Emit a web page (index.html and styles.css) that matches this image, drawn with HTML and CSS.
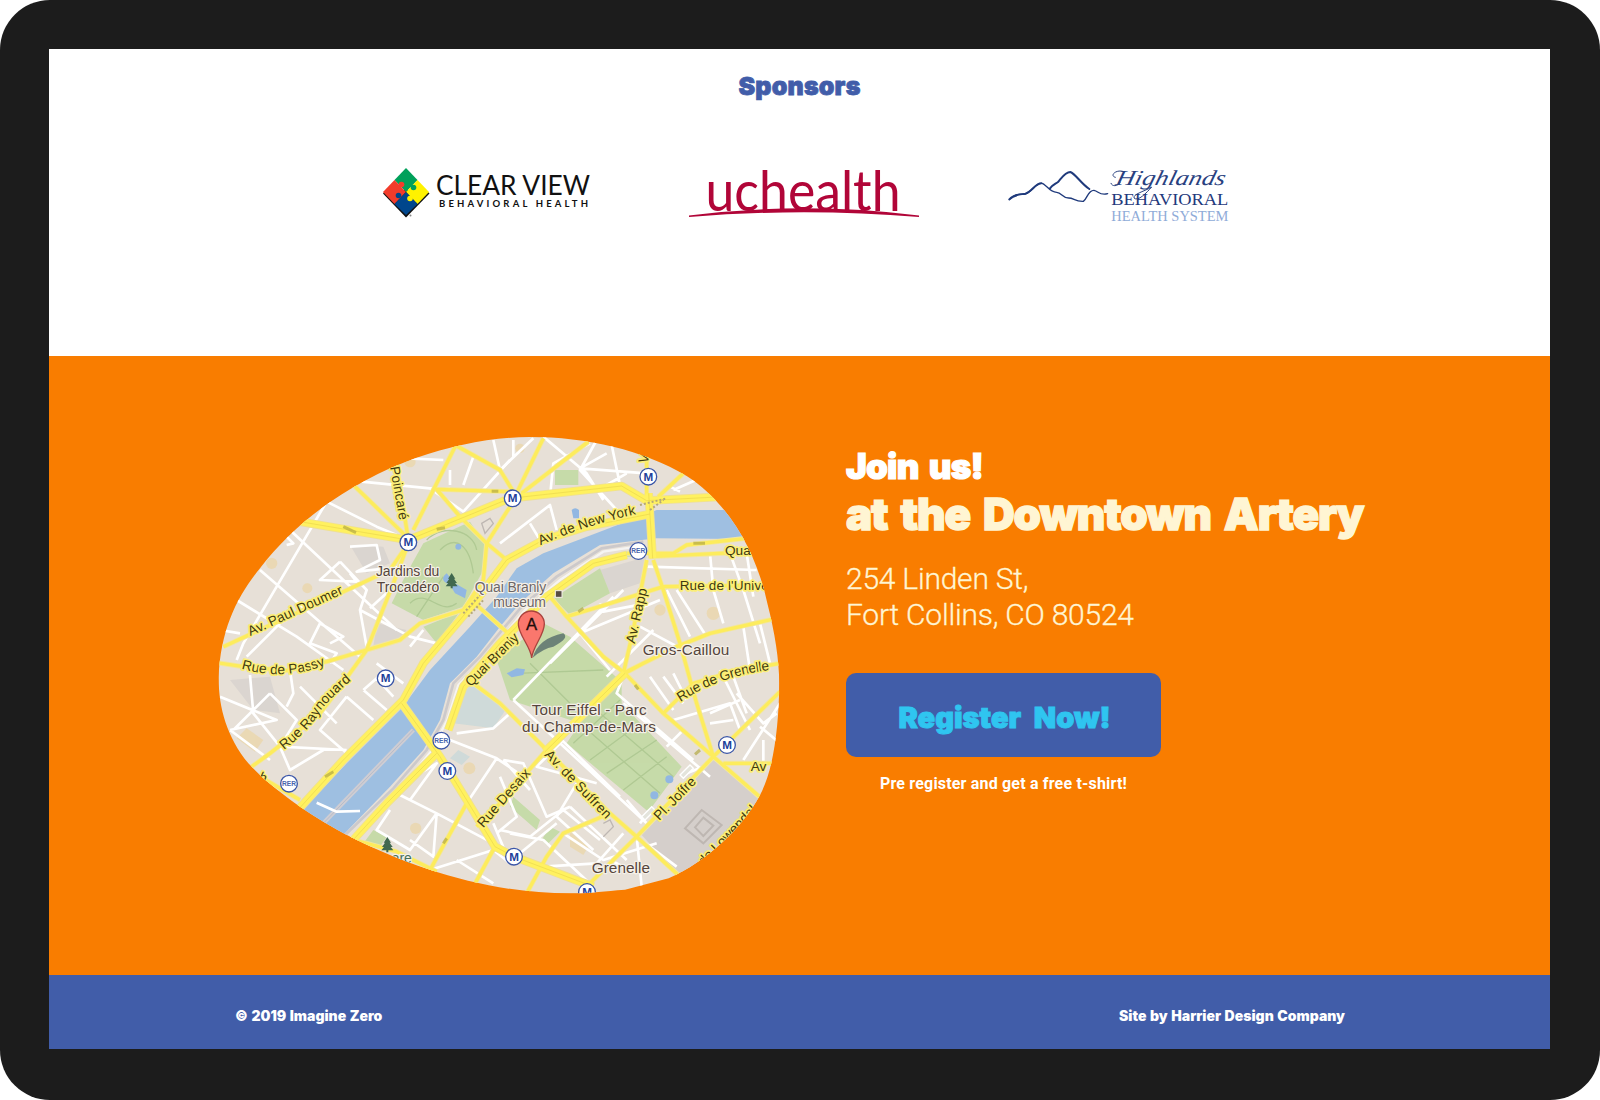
FILE: index.html
```html
<!DOCTYPE html>
<html lang="en">
<head>
<meta charset="utf-8">
<title>Imagine Zero</title>
<link rel="stylesheet" href="styles.css">
</head>
<body>
<div class="device">
  <section class="sponsors">
    <h2 class="sponsors-title">Sponsors</h2>
    <div class="logos">
      <svg width="220" height="65" viewBox="380 160 220 65" role="img" aria-label="Clear View Behavioral Health">
        <path d="M383 193.5L406 217.5L429.5 193.5L426 190H386Z" fill="#111"/>
        <path d="M406 168L417.5 180L406 192L394.500 180Z" fill="#00a05a"/>
        <path d="M394.500 180L406 192L394.500 204L383 192Z" fill="#f23c2b"/>
        <path d="M417.500 180L429 192L417.500 204L406 192Z" fill="#fff200"/>
        <path d="M406 192L417.500 204L406 215L394.500 204Z" fill="#00468c"/>
        <circle cx="401.500" cy="184.500" r="2.800" fill="#f23c2b"/>
        <circle cx="413.500" cy="187.500" r="2.800" fill="#00a05a"/>
        <circle cx="398.500" cy="195.500" r="2.800" fill="#00468c"/>
        <circle cx="410" cy="198.500" r="2.800" fill="#fff200"/>
        <circle cx="410.500" cy="215.500" r="1" fill="#888"/>
        <text class="cv-name" x="436" y="195" textLength="154" lengthAdjust="spacingAndGlyphs">CLEAR VIEW</text>
        <text class="cv-sub" x="439" y="206.500" textLength="149">BEHAVIORAL HEALTH</text>
      </svg>
      <svg width="240" height="65" viewBox="685 160 240 65" role="img" aria-label="uchealth">
        <text class="uc-name" x="705.500" y="210.500" textLength="195" lengthAdjust="spacingAndGlyphs">uchealth</text>
        <path d="M689 215.500Q804 201 919 215.500V217Q804 207.500 689 217Z" fill="#b10538"/>
      </svg>
      <svg width="235" height="65" viewBox="195 60 705 195" role="img" aria-label="Highlands Behavioral Health System">
        <g class="peaks">
          <path d="M208 179C222 162 238 162 256 162C276 156 286 128 306 130C318 132 328 157 350 157C366 158 366 174 386 174C402 174 404 185 430 184C442 176 444 150 462 151C476 154 480 168 503 161" stroke-width="4"/>
          <path d="M208 178C222 163 238 164 256 161C276 155 286 130 304 130" stroke-width="6"/>
          <path d="M330 145C336 136 346 132 354 126C366 112 376 96 391 96C406 101 424 132 448 147" stroke-width="6"/>
        </g>
        <g transform="translate(524 136) skewX(-14)"><text class="hl-script" x="0" y="0" textLength="328" lengthAdjust="spacingAndGlyphs">Highlands</text></g>
        <path class="flourish" d="M548 94C526 88 508 108 526 112M540 128C532 140 516 140 513 130M634 142C620 158 594 186 582 174C580 162 608 156 634 142"/>
        <text class="hl-main" x="514" y="194" textLength="351" lengthAdjust="spacingAndGlyphs">BEHAVIORAL</text>
        <text class="hl-sub" x="514" y="242" textLength="351" lengthAdjust="spacingAndGlyphs">HEALTH SYSTEM</text>
      </svg>
    </div>
  </section>

  <section class="join">
    <svg class="map" width="580" height="470" viewBox="0 0 1740 1410" role="img" aria-label="Map">
      <defs>
        <clipPath id="blob"><path d="M960 21C1130 21 1300 60 1430 138C1560 222 1640 370 1672 520C1695 610 1707 690 1708 760C1706 900 1690 1020 1650 1095C1600 1190 1490 1295 1376 1345L1245 1379C1180 1383 1150 1390 1090 1390C850 1392 620 1320 430 1225C280 1148 170 1060 115 1000C50 920 25 830 26 740C32 600 80 500 150 415C260 270 430 150 620 83C730 45 850 21 960 21Z"/></clipPath>
        <g id="metro"><circle r="25" fill="#fff" stroke="#3c57a8" stroke-width="4"/><text class="metro-m" y="12">M</text></g>
        <g id="rer"><circle r="25" fill="#fff" stroke="#3c57a8" stroke-width="4"/><text class="rer-t" y="7">RER</text></g>
        <g id="tree" fill="#41684f"><path d="M0 -22L11 -5H7L16 8H10L18 18H3V24H-3V18H-18L-10 8H-16L-7 -5H-11Z"/></g>
        <g id="yellow-roads">
          <path d="M430 165L595 325M560 105L595 330M735 50L610 300M40 650L400 485L540 420L595 340L550 460L470 660L380 785L330 850L180 970L125 1010M20 698L100 710L230 722L350 695L470 660L570 630L630 580L760 540L820 450L830 340L750 260L680 178L900 185M830 340L900 230L1000 25M830 340L890 390M735 45L870 120L910 185M935 190L1135 35M1310 70V210M1345 200L1420 130"/>
          <path d="M1610 325L1430 345L1390 370H1250M1320 380L1640 365M1020 500L1070 560L1180 680L1245 730L1360 850L1510 980L1660 1110M1070 560L1200 520L1360 470L1690 465M1310 390L1270 600L1240 730L1400 650L1500 610L1700 565M1330 390L1360 480L1410 640L1460 820L1510 980L1710 785M1360 850L1450 760L1570 725L1710 700M1540 1000H1690M1510 980L1280 1220L1130 1370M790 760L870 820L1010 960L1200 1150L1280 1220L1410 1340M1200 1150L1060 1210L1010 1280L950 1390M800 525L900 615M770 1120L660 1320M430 1230L470 1240L560 1265L680 1325M855 1250L790 1370M150 1040L270 1110M1005 965L870 1120L800 1190M1245 730L1300 700"/>
        </g>
        <g id="yellow-avenues">
          <path d="M1320 252L1130 290L1000 330L890 390L800 510L640 700L580 810L400 990L250 1155M270 275L595 330L900 205L1235 168L1310 212L1540 200M1316 190L1328 385M1250 375L1150 400L1010 500L870 640L760 770L715 900M680 970L530 1120L420 1240M575 820L690 980L770 1110L855 1250L912 1280L1150 1370M1245 730L1005 965"/>
        </g>
      </defs>
      <g clip-path="url(#blob)">
        <rect width="1740" height="1410" fill="#e7e0d7"/>
        <path d="M420 345L520 350L540 400L470 430ZM1170 420L1310 380L1290 460L1200 490ZM60 750L180 740L210 850L130 840ZM500 580L590 600L570 625L490 650Z" fill="#dbd5d0"/>
        <path d="M1510 990L1660 1110L1560 1300L1400 1330L1295 1215Z" fill="#d5cfcb"/>
        <path d="M730 880L760 790L790 755L890 835L850 895ZM745 960L780 980L755 1005L720 985Z" fill="#cfdbd9"/>
        <g fill="#c6dba9">
          <path d="M640 340L780 275L830 350L815 430L760 530L640 570L545 520L590 430ZM640 590L750 545L680 640ZM860 690L1000 580L1080 620L1235 755V820L1415 1010L1315 1145L1070 940L1110 880L900 810ZM1030 505L1170 415L1200 490L1080 555ZM1035 120H1105V165H1035ZM910 1100L990 1170L980 1200L900 1130ZM1020 1190L1050 1205L1010 1245L995 1230ZM490 1200L530 1220L510 1250L460 1240ZM1190 380L1300 350L1290 380Z"/>
        </g>
        <path d="M650 330C700 280 790 300 800 360M690 360C740 310 780 350 790 430M600 520C650 470 690 560 740 520M620 560L700 440M960 700L1080 820M920 730L1180 720M1110 880L1350 1090M1170 850L1390 1040M1090 940L1230 810M1140 990L1290 880M1190 1030L1340 930M1240 1080L1370 980" fill="none" stroke="#b0c993" stroke-width="4"/>
        <path d="M1700 240H1340L1170 305L1000 370L920 415L860 500L780 590L660 720L575 835L410 1000L230 1190L390 1225L540 1070L640 960L690 870L720 760L800 680L870 590L930 520L1030 430L1170 345L1340 325L1700 328Z" fill="#9fbfe1"/>
        <path d="M390 1230L550 1075L650 960L700 870L730 760L810 680L935 530L1040 440L1175 355L1300 335" fill="none" stroke="#ccc9cb" stroke-width="8"/>
        <path d="M405 1240L565 1085L662 965L712 870L745 765L820 690L945 540L1050 450L1180 365L1300 347" fill="none" stroke="#f6f4f2" stroke-width="7"/>
        <path d="M610 900L340 1180" fill="none" stroke="#cfcdd3" stroke-width="13"/>
        <path d="M610 900L340 1180" fill="none" stroke="#aab4c4" stroke-width="2"/>
        <g fill="#ebd5a5" opacity=".7"><circle cx="185" cy="400" r="17"/><circle cx="292" cy="475" r="15"/><path d="M110 895L160 930L135 965L80 925Z"/><path d="M1080 1205L1135 1250L1120 1275L1080 1250Z"/><circle cx="1510" cy="550" r="20"/><circle cx="1350" cy="540" r="17"/><circle cx="617" cy="1195" r="17"/><circle cx="778" cy="1015" r="18"/><circle cx="930" cy="55" r="14"/><circle cx="600" cy="95" r="17"/></g>
        <path class="lanes" d="M80 510L260 620L400 720M150 420L450 680M240 300L560 600M350 215L500 290L560 315M220 310L250 340L230 345M590 85L700 90M455 155L660 175L760 245L900 90M720 165V120M760 165L790 80M850 30L870 120M660 175L720 175M350 215L200 470L100 640L80 690M390 395L330 450L440 455L420 430M390 395L470 480L450 540L470 650M450 540L600 620L680 640M600 650L640 600M420 350L500 345L510 390L440 425L580 410M210 580L110 680M330 580L300 640L380 670L360 700M330 580L400 620L360 640M30 600L90 610M480 535L540 480"/>
        <path class="lanes" d="M30 800L200 870L60 900M120 735L130 850L210 950L410 960M60 900L180 990M180 790L70 900M180 790L260 870L210 950M240 720L250 790L230 830M270 770L380 880M410 800L330 900L410 970M410 800L490 870M340 960L240 1020L210 950M460 780L500 745L550 800M460 780L530 840M500 700L580 760M570 1095L680 1150L850 1240M600 1110L680 1000L620 1035M680 1150L600 1260L500 1200L540 1140M680 1150L670 1280L600 1230M720 930L860 985L940 1040M860 985L770 1120M740 910L850 895L900 850M660 1320L850 1260L900 1300M740 1290L850 1360M900 1300L850 1180M880 990L960 1080M900 1210L1000 1230L1150 1370M870 1200L960 1220L1060 1140L1170 1230"/>
        <path class="lanes" d="M910 30V80M970 25L870 120M1000 20L1130 130L1180 210M1160 30L1110 120L1220 240M1190 70L1110 115L1310 130M1205 45L1230 165M870 340L1020 225L1040 300M960 280L990 330M1020 200L1030 100L1140 40M1250 130L1190 165M1390 180L1480 140M1380 170L1410 185M1310 410L1640 420M1500 370L1510 480L1540 580M1560 370L1600 480L1650 640M1610 370L1630 500M1170 520L1180 545L1310 520M1110 610L1350 510M1020 700L1240 480M1110 610L1200 720M1290 590L1420 660M1370 480L1440 620M1400 480L1490 620M1600 590L1620 720M1650 580L1680 700M1330 600L1190 740"/>
        <path class="lanes" d="M910 810L1210 500M910 810L1310 1180M1045 920L1230 1100M1060 930L980 1010L1160 1060M1240 740L1220 790L1450 990M1370 950L1420 900M1240 820L1500 1040M1320 740L1390 840M1360 740L1420 820M1390 730L1430 810M1530 720L1620 900M1570 740L1610 850M1500 850L1590 810M1390 870L1560 820L1590 900M1500 880L1570 870M1710 820L1600 990M1580 790L1660 880L1700 850M1650 890L1710 940M1660 930V1000M1310 1180L1250 1110M1290 1180L1320 1140M1280 1220L1295 1370M1280 1220L1400 1310M1080 1130L1250 1290M1100 1060L1040 1160L1150 1260M880 990L940 1000L1010 1160L1080 1130M930 1270L1040 1180M1060 1210L1180 1290L1340 1240M1240 1210L1160 1300L1000 1310M870 1040L920 1160L860 1210M1430 1030L1480 1010M1200 1290L1280 1330M320 1118L380 1145L450 1143"/>
        <use href="#yellow-roads" class="road-edge"/>
        <use href="#yellow-avenues" class="avenue-edge"/>
        <use href="#yellow-roads" class="road"/>
        <use href="#yellow-avenues" class="avenue"/>
        <use href="#yellow-avenues" class="median"/>
        <g fill="none" stroke="#beb7b2" stroke-width="6"><path d="M1425 1195L1475 1140L1535 1185L1480 1240ZM1455 1192L1480 1163L1510 1187L1480 1218Z"/><path d="M1180 1180L1200 1170L1210 1190L1180 1220M815 280L840 265L850 280L825 310Z" stroke-width="4"/></g>
        <path d="M1410 1035L1440 1005L1450 1015L1420 1045ZM1295 1160L1325 1130L1335 1140L1305 1170Z" fill="#e4e4dc" stroke="#fff" stroke-width="4"/>
        <g fill="#91b7e2"><circle cx="745" cy="350" r="9"/><path d="M710 430C685 450 710 460 720 465L735 490L765 505L770 480L735 460Z"/><path d="M890 730L920 715L945 718L940 735L905 742Z"/><circle cx="1378" cy="1048" r="12"/><circle cx="1333" cy="1096" r="12"/><path d="M1085 240Q1095 230 1107 240V265H1090Z"/></g>
        <g fill="none" stroke="#b4a945" stroke-width="9" opacity=".7"><path d="M400 290L438 308M680 298L705 293M845 184L865 184M1105 545L1120 535M1450 340L1485 340M1455 973L1470 960M1275 765L1285 778M345 1040L370 1025M700 1240L710 1225"/></g>
        <g class="rail"><path d="M760 550L810 495M775 560L820 510"/><path d="M1290 225L1370 205M1320 240L1360 210"/></g>
        <use href="#tree" x="725" y="451"/><use href="#tree" x="532" y="1243"/>
        <rect x="1036" y="482" width="20" height="20" fill="#574c43" stroke="#f4efe8" stroke-width="3"/>
        <use href="#metro" x="595" y="337"/><use href="#metro" x="908" y="205"/><use href="#metro" x="1315" y="140"/><use href="#metro" x="527" y="745"/><use href="#metro" x="712" y="1023"/><use href="#metro" x="912" y="1280"/><use href="#metro" x="1551" y="945"/><use href="#metro" x="1131" y="1386"/>
        <use href="#rer" x="1285" y="363"/><use href="#rer" x="694" y="932"/><use href="#rer" x="237" y="1061"/>
        <g class="street">
          <text transform="translate(540 112) rotate(80)" textLength="162">Poincaré</text>
          <text transform="translate(121 618) rotate(-24.500)" textLength="308">Av. Paul Doumer</text>
          <path id="passy" d="M94 716Q230 755 354 702" fill="none" stroke="none"/>
          <text><textPath href="#passy" textLength="257">Rue de Passy</textPath></text>
          <path id="raynouard" d="M222 960Q305 895 333 840Q375 790 436 741" fill="none" stroke="none"/>
          <text><textPath href="#raynouard" textLength="292">Rue Raynouard</textPath></text>
          <path id="newyork" d="M992 346Q1120 287 1285 251" fill="none" stroke="none"/>
          <text><textPath href="#newyork" textLength="302">Av. de New York</textPath></text>
          <text transform="translate(782 772) rotate(-45)" textLength="208">Quai Branly</text>
          <text transform="translate(1274 642) rotate(-77)" textLength="168">Av. Rapp</text>
          <text x="1545" y="376">Quai d'Orsay</text>
          <text x="1409" y="480" textLength="346">Rue de l'Université</text>
          <path id="grenelle" d="M1412 816Q1530 735 1690 719" fill="none" stroke="none"/>
          <text><textPath href="#grenelle" textLength="286">Rue de Grenelle</textPath></text>
          <text transform="translate(1002 976) rotate(46)" textLength="268">Av. de Suffren</text>
          <text transform="translate(820 1195) rotate(-49)" textLength="218">Rue Desaix</text>
          <text transform="translate(1348 1173) rotate(-46)" textLength="162">Pl. Joffre</text>
          <text x="1622" y="1024">Av</text>
          <text transform="translate(1481 1309) rotate(-46)">de Lowendal</text>
          <text transform="translate(1312 102) rotate(-75)">V</text>
          <text transform="translate(143 1050) rotate(25)">h</text>
        </g>
        <g class="place">
          <text x="498" y="438" textLength="190">Jardins du</text><text x="500" y="486" textLength="188">Trocadéro</text>
          <text x="794" y="486" textLength="215" class="museum">Quai Branly</text><text x="850" y="532" textLength="158" class="museum">museum</text>
          <text x="1298" y="675" textLength="260" class="large">Gros-Caillou</text>
          <text x="965" y="855" textLength="345" class="large">Tour Eiffel - Parc</text><text x="936" y="906" textLength="402" class="large">du Champ-de-Mars</text>
          <text x="1145" y="1330" textLength="175" class="large">Grenelle</text><text x="545" y="1298" class="square">are</text>
        </g>
        <path d="M968 683Q985 625 1060 610Q1080 625 1030 650Q1000 655 968 683Z" fill="#465c63" opacity=".7"/>
        <path d="M965 684C963 650 925 615 925 582A39 39 0 0 1 1003 582C1003 615 968 650 965 684Z" fill="#fa776d" stroke="#a9433e" stroke-width="4"/>
        <text class="pin-a" x="965" y="601">A</text>
      </g>
    </svg>
    <div class="info">
      <h2 class="headline">Join us!</h2>
      <h1 class="venue">at the Downtown Artery</h1>
      <p class="address">254 Linden St,<br>Fort Collins, CO 80524</p>
      <a class="register">Register Now!</a>
      <p class="note">Pre register and get a free t-shirt!</p>
    </div>
  </section>

  <footer class="footer">
    <span class="copyright">© 2019 Imagine Zero</span>
    <span class="credit">Site by Harrier Design Company</span>
  </footer>
</div>
</body>
</html>
```

FILE: styles.css
```css
* { box-sizing: border-box; }
body { margin: 0; background: #fff; }
h1, h2, p { margin: 0; }
.device {
  width: 1600px; height: 1100px;
  padding: 49px 50px 51px 49px;
  background: #1c1c1c; border-radius: 50px;
  display: flex; flex-direction: column;
  font-family: Inter, sans-serif;
}
.sponsors { height: 307px; background: #fff; padding-top: 20px; }
.sponsors-title, .headline, .venue, .register, .footer {
  font-family: Inter, sans-serif; font-weight: 900; white-space: nowrap;
}
.sponsors-title {
  height: 34px; line-height: 34px; text-align: center;
  font-size: 25px; letter-spacing: .2px; color: #415da9; -webkit-text-stroke: .8px #415da9;
}
.logos { display: grid; grid-template-columns: 305px 320px 235px; padding: 57px 0 0 331px; }
.logos svg { display: block; }
.cv-name { font: 400 26px Lato, sans-serif; fill: #111; }
.cv-sub { font: 700 9.500px Lato, sans-serif; fill: #111; }
.uc-name { font: 400 57px Lato, sans-serif; fill: #b10538; }
.peaks { fill: none; stroke: #1f3a7c; stroke-linecap: round; }
.hl-script { font: italic 400 64px "Liberation Serif", serif; fill: #29417f; }
.flourish { fill: none; stroke: #29417f; stroke-width: 3; stroke-linecap: round; }
.hl-main { font: 400 49px "Liberation Serif", serif; fill: #1f3a7c; }
.hl-sub { font: 400 41px "Liberation Serif", serif; fill: #8fabd8; }

.join {
  height: 619px; background: #f97d00;
  display: grid; grid-template-columns: 580px auto; column-gap: 56px;
  padding: 74px 0 0 161px;
}
.map { display: block; }
.lanes { fill: none; stroke: #fff; stroke-width: 8; stroke-linejoin: round; }
.road-edge, .avenue-edge, .road, .avenue, .median { fill: none; stroke-linejoin: round; }
.road-edge { stroke: #f2e6a0; stroke-width: 15; }
.road { stroke: #fdec5c; stroke-width: 10; }
.avenue-edge { stroke: #efe092; stroke-width: 26; }
.avenue { stroke: #fff15f; stroke-width: 21; }
.median { stroke: #ead64d; stroke-width: 2; }
.rail { fill: none; stroke: #b5a878; stroke-width: 6; stroke-dasharray: 6 6; }
.street text {
  font: 400 41px "Liberation Sans", sans-serif; fill: #40380f;
  stroke: #fbee78; stroke-width: 10; stroke-linejoin: round; paint-order: stroke;
}
.place text {
  font: 400 42px "Liberation Sans", sans-serif; fill: #56453c;
  stroke: #f4f0e8; stroke-width: 7; stroke-linejoin: round; paint-order: stroke;
}
.place .large { font-size: 46px; }
.place .museum { fill: #6d6667; }
.place .square { fill: #47705b; }
.metro-m { font: 700 35px "Liberation Sans", sans-serif; fill: #21409a; text-anchor: middle; }
.rer-t { font: 700 20px "Liberation Sans", sans-serif; fill: #4966ad; text-anchor: middle; }
.pin-a { font: 400 50px "Liberation Sans", sans-serif; fill: #220c0b; stroke: #220c0b; text-anchor: middle; }

.info { padding-top: 15px; }
.headline { height: 42px; line-height: 42px; font-size: 35px; letter-spacing: -.8px; word-spacing: 4px; color: #fff; -webkit-text-stroke: 1.200px #fff; }
.venue { height: 54px; line-height: 54px; font-size: 44px; letter-spacing: -1.200px; word-spacing: 5.500px; color: #fff5d3; -webkit-text-stroke: 1.400px #fff5d3; }
.address {
  padding: 20px 0 0 0; font: 300 30px/36px Roboto, sans-serif; letter-spacing: -.23px;
  color: #fff5d3; -webkit-text-stroke: .3px #fff5d3; white-space: nowrap;
}
.register {
  display: flex; align-items: center; justify-content: center;
  width: 315px; height: 84px; margin-top: 40px; padding: 5px 0 0 2px;
  border-radius: 10px; background: #415da9;
  font-size: 29px; word-spacing: 7px; color: #2fc5f0; -webkit-text-stroke: 1px #2fc5f0;
}
.note { width: 315px; padding-top: 15px; text-align: center; font: 700 16px/24px Roboto, sans-serif; letter-spacing: .18px; color: #fff; }
.footer {
  height: 74px; background: #415da9; color: #fff;
  display: flex; justify-content: space-between; align-items: center;
  padding: 7px 205px 0 186px; font-size: 14px; word-spacing: .8px;
}
```
